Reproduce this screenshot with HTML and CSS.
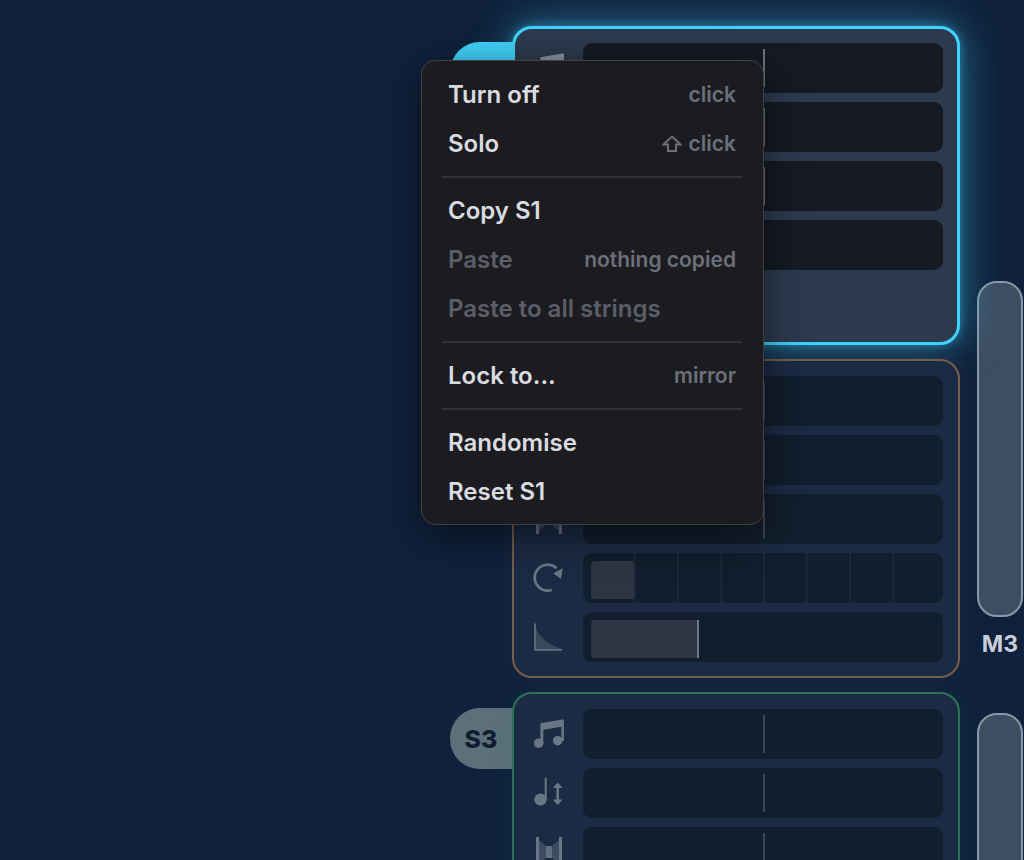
FILE: index.html
```html
<!DOCTYPE html>
<html lang="en">
<head>
    <meta charset="UTF-8">
    <title>Strings</title>
    <link rel="stylesheet" href="styles.css">
</head>
<body>
    <div class="rack">
        <div class="strings">
            <section class="string">
                <div class="tab tab-active">S1</div>
                <div class="card card-active">
                    <div class="row">
                        <svg class="icon" viewBox="0 0 40 40"><use href="#i-notes"/></svg>
                        <div class="track"><i class="center"></i></div>
                    </div>
                    <div class="row">
                        <svg class="icon" viewBox="0 0 40 40"><use href="#i-pitch"/></svg>
                        <div class="track"><i class="center"></i></div>
                    </div>
                    <div class="row">
                        <svg class="icon" viewBox="0 0 40 40"><use href="#i-bow"/></svg>
                        <div class="track"><i class="center"></i></div>
                    </div>
                    <div class="row">
                        <svg class="icon" viewBox="0 0 40 40"><use href="#i-loop"/></svg>
                        <div class="track"></div>
                    </div>
                </div>
            </section>

            <section class="string">
                <div class="tab tab-s2">S2</div>
                <div class="card card-orange">
                    <div class="row">
                        <svg class="icon" viewBox="0 0 40 40"><use href="#i-notes"/></svg>
                        <div class="track"><i class="center"></i></div>
                    </div>
                    <div class="row">
                        <svg class="icon" viewBox="0 0 40 40"><use href="#i-pitch"/></svg>
                        <div class="track"><i class="center"></i></div>
                    </div>
                    <div class="row">
                        <svg class="icon" viewBox="0 0 40 40"><use href="#i-bow"/></svg>
                        <div class="track"><i class="center"></i></div>
                    </div>
                    <div class="row">
                        <svg class="icon" viewBox="0 0 40 40"><use href="#i-loop"/></svg>
                        <div class="track steps">
                            <div class="step"><i class="step-fill"></i></div>
                            <div class="step"></div>
                            <div class="step"></div>
                            <div class="step"></div>
                            <div class="step"></div>
                            <div class="step"></div>
                            <div class="step"></div>
                            <div class="step"></div>
                        </div>
                    </div>
                    <div class="row">
                        <svg class="icon" viewBox="0 0 40 40"><use href="#i-decay"/></svg>
                        <div class="track"><div class="amount"></div></div>
                    </div>
                </div>
            </section>

            <section class="string">
                <div class="tab tab-s3">S3</div>
                <div class="card card-green">
                    <div class="row">
                        <svg class="icon" viewBox="0 0 40 40"><use href="#i-notes"/></svg>
                        <div class="track"><i class="center"></i></div>
                    </div>
                    <div class="row">
                        <svg class="icon" viewBox="0 0 40 40"><use href="#i-pitch"/></svg>
                        <div class="track"><i class="center"></i></div>
                    </div>
                    <div class="row">
                        <svg class="icon" viewBox="0 0 40 40"><use href="#i-bow"/></svg>
                        <div class="track"><i class="center"></i></div>
                    </div>
                </div>
            </section>
        </div>

        <div class="macros">
            <div class="macro">
                <div class="slider"></div>
                <div class="macro-name">M3</div>
            </div>
            <div class="macro">
                <div class="slider"></div>
            </div>
        </div>
    </div>

    <div class="menu">
        <div class="item"><span>Turn off</span><span class="hint">click</span></div>
        <div class="item">
            <span>Solo</span>
            <span class="hint">
                <svg class="shift" viewBox="0 0 20 20"><path d="M10 2.5 18.5 10.5H14V17H6V10.5H1.5Z"/></svg>
                click
            </span>
        </div>
        <div class="divider"></div>
        <div class="item"><span>Copy S1</span></div>
        <div class="item item-off"><span>Paste</span><span class="hint">nothing copied</span></div>
        <div class="item item-off"><span>Paste to all strings</span></div>
        <div class="divider"></div>
        <div class="item"><span>Lock to...</span><span class="hint">mirror</span></div>
        <div class="divider"></div>
        <div class="item"><span>Randomise</span></div>
        <div class="item"><span>Reset S1</span></div>
    </div>

    <!-- icons -->
    <svg class="defs" width="0" height="0">
        <defs>
            <g id="i-notes" fill="currentColor">
                <circle cx="9.7" cy="29.2" r="4.8"/>
                <circle cx="28.7" cy="26.7" r="4.8"/>
                <path d="M11.4 29V9.3L34.9 5.2V27H32.4V12.8L14.3 15.8V29Z"/>
            </g>
            <g id="i-pitch" fill="currentColor">
                <ellipse cx="11.5" cy="26.5" rx="6.2" ry="6"/>
                <rect x="15.7" y="4.7" width="2" height="22"/>
                <path d="M28.7 9.5 33.7 15H30V26.5H33.7L28.7 32 23.7 26.5H27.4V15H23.7Z"/>
            </g>
            <g id="i-bow" fill="currentColor">
                <path d="M7 5V35H10V5ZM30 5V35H33V5Z"/>
                <path d="M10 8 17 14V26L10 32ZM30 8 23 14V26L30 32Z" opacity=".45"/>
                <rect x="17" y="14" width="6" height="12" opacity=".9"/>
            </g>
            <g id="i-loop">
                <path d="M27.7 10.3A13 13 0 1 0 22.7 32" fill="none" stroke="currentColor" stroke-width="2.6"/>
                <path d="M33.7 10.3 32 21 24.3 15.3Z" fill="currentColor"/>
            </g>
            <g id="i-decay">
                <path d="M6 7Q9 24 33 32V33H6Z" fill="currentColor" opacity=".4"/>
                <path d="M6 6.5V33H33.3" fill="none" stroke="currentColor" stroke-width="1.6"/>
            </g>
        </defs>
    </svg>
</body>
</html>
```

FILE: styles.css
```css
* {
    box-sizing: border-box;
}
html, body {
    height: 100%;
}
body {
    margin: 0;
    height: 860px;
    overflow: hidden;
    background-color: #0f213c;
    font-family: Inter, "Liberation Sans", sans-serif;
    color: #d9dbe1;
}
.rack {
    display: flex;
    padding: 26px 0 0 450px;
}
.strings {
    display: flex;
    flex-direction: column;
    gap: 14px;
    width: 510px;
    flex-shrink: 0;
}
.string {
    display: flex;
    align-items: flex-start;
}
.tab {
    width: 64px;
    height: 61px;
    margin: 16px -2px 0 0;
    padding-right: 2px;
    display: flex;
    align-items: center;
    justify-content: center;
    border-radius: 30px 0 0 30px;
    font-size: 25px;
    font-weight: 800;
    color: #121d2f;
}
.tab-active {
    background-color: #40d2fa;
}
.tab-s2 {
    background-color: #6d6157;
}
.tab-s3 {
    background-color: #5b7079;
}
.card {
    flex: 1;
    min-height: 319px;
    padding: 15px 15px 14px;
    display: flex;
    flex-direction: column;
    gap: 9px;
    border: 2px solid;
    border-radius: 20px;
    background-color: #1b2b44;
    color: #6a7685;
    position: relative;
}
.card-active {
    padding: 14px 14px 13px;
    border: 3px solid #40d2fa;
    background-color: #2d3a4e;
    box-shadow: 0 0 10px rgba(64, 210, 250, 0.4), 0 0 40px rgba(64, 210, 250, 0.5);
    color: #8a929e;
}
.card-orange {
    border-color: #775f4b;
    box-shadow: 0 0 20px rgba(128, 102, 79, 0.12);
}
.card-green {
    border-color: #2c7357;
    box-shadow: 0 0 20px rgba(47, 122, 92, 0.12);
}
.row {
    display: flex;
    align-items: center;
    gap: 14px;
    height: 50px;
}
.icon {
    width: 40px;
    height: 40px;
    flex-shrink: 0;
}
.track {
    flex: 1;
    height: 50px;
    position: relative;
    padding: 8px 8px 4px;
    border-radius: 9px;
    background-color: #121e2d;
}
.card-active .track {
    background-color: #151a23;
}
.center {
    position: absolute;
    left: 180px;
    top: 6px;
    bottom: 6px;
    width: 2px;
    background-color: #3c4858;
}
.card-active .center {
    background-color: #6d7480;
}
.steps {
    display: grid;
    grid-template-columns: repeat(8, 1fr);
    padding: 0 6px 0 10px;
}
.step {
    border-right: 2px solid #1c2736;
    padding: 8px 0 4px;
}
.step:last-child {
    border-right: none;
}
.step-fill {
    display: block;
    width: calc(100% + 2px);
    height: 100%;
    margin-left: -2px;
    border-radius: 4px 0 0 4px;
    background-color: #2d3545;
}
.amount {
    width: 108px;
    height: 100%;
    border-right: 2px solid #6b7a90;
    border-radius: 4px 0 0 4px;
    background-color: #2d3545;
}
.macros {
    width: 46px;
    margin-left: 17px;
    padding-top: 255px;
    display: flex;
    flex-direction: column;
    flex-shrink: 0;
}
.macro {
    height: 432px;
}
.slider {
    height: 336px;
    border: 2px solid #8b97a8;
    border-radius: 20px;
    background-color: #3d4e63;
}
.macro-name {
    margin-top: 14px;
    text-align: center;
    font-size: 23px;
    font-weight: 700;
    line-height: 26px;
    color: #c9ced8;
}
.menu {
    position: absolute;
    left: 421px;
    top: 60px;
    width: 343px;
    height: 465px;
    padding: 9px 21px 9px 20px;
    border: 1.5px solid #3f3f44;
    border-radius: 14px;
    background-color: #1c1c20;
    box-shadow: 0 10px 40px rgba(0, 0, 0, 0.55);
}
.item {
    display: flex;
    align-items: center;
    justify-content: space-between;
    height: 49px;
    padding: 0 6px;
    font-size: 24px;
    font-weight: 600;
    white-space: nowrap;
}
.item-off {
    color: #5b5e69;
}
.hint {
    display: flex;
    align-items: center;
    gap: 7px;
    font-size: 21px;
    color: #6b6f7a;
}
.shift {
    width: 20px;
    height: 20px;
    fill: none;
    stroke: currentColor;
    stroke-width: 2;
}
.divider {
    height: 2px;
    margin: 8px 0;
    background-color: #303035;
}
.defs {
    position: absolute;
}
```
